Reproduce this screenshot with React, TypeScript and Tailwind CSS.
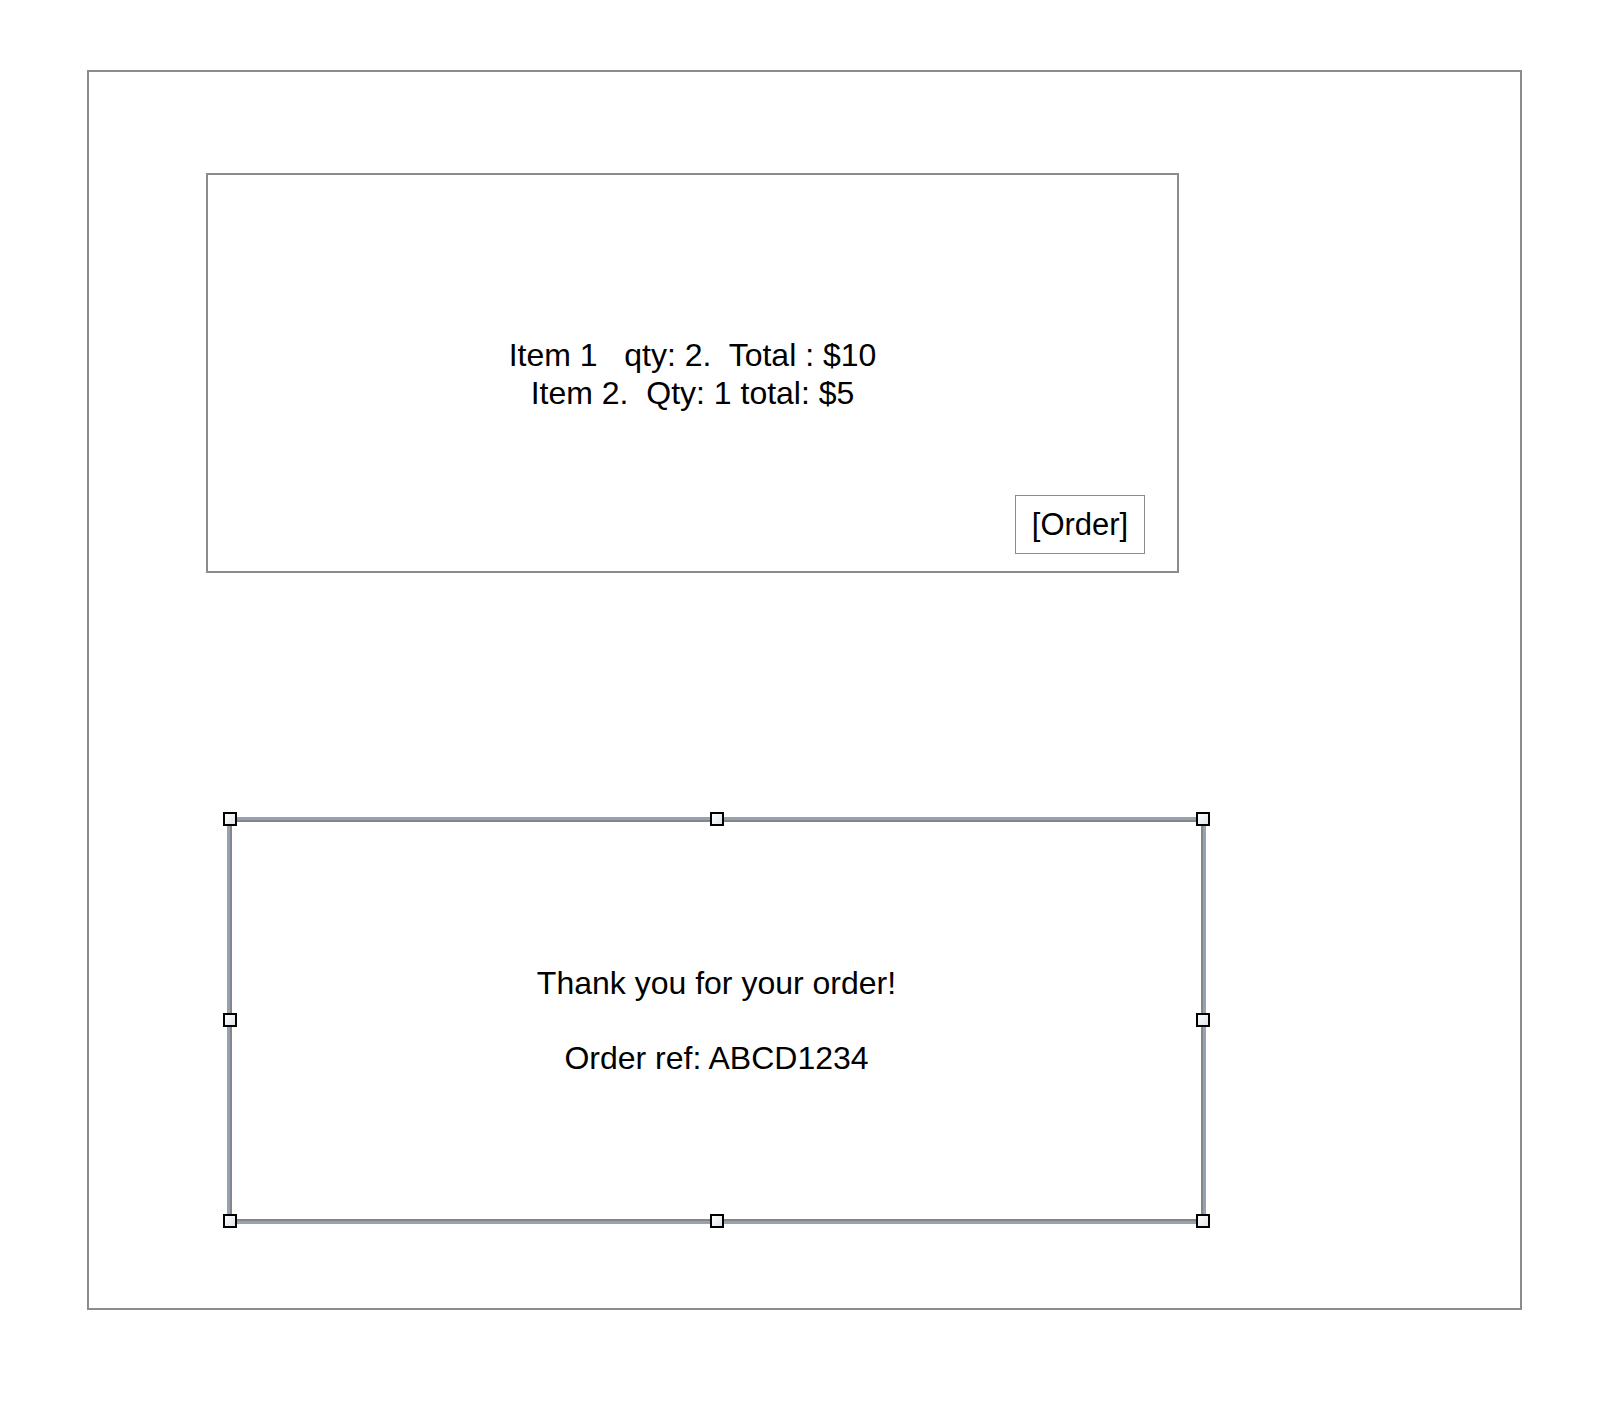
import React from 'react';

const handleSpots = [
  'left-[-7px] top-[-8px]',
  'left-[480px] top-[-8px]',
  'right-[-7px] top-[-8px]',
  'left-[-7px] top-[193px]',
  'right-[-7px] top-[193px]',
  'left-[-7px] bottom-[-7px]',
  'left-[480px] bottom-[-7px]',
  'right-[-7px] bottom-[-7px]',
];

function Handle({ spot }: { spot: string }) {
  return (
    <div
      className={`absolute ${spot} h-[14px] w-[14px] border-2 border-black bg-gradient-to-br from-white to-[#dfe3e8]`}
    />
  );
}

export default function App() {
  return (
    <div
      className="min-h-screen bg-white pl-[87px] pt-[70px] text-black"
      style={{ fontFamily: '"Liberation Sans", Arial, Helvetica, sans-serif' }}
    >
      {/* Page frame */}
      <div className="h-[1240px] w-[1435px] border-2 border-[#8c8c8c] pl-[117px] pt-[101px]">
        {/* Cart */}
        <div className="grid h-[400px] w-[973px] border-2 border-[#8c8c8c]">
          <div className="col-start-1 row-start-1 flex flex-col items-center justify-center pt-[2px] text-[32px] leading-[38px] whitespace-pre">
            <p>Item 1   qty: 2.  Total : $10</p>
            <p>Item 2.  Qty: 1 total: $5</p>
          </div>
          <button className="col-start-1 row-start-1 mb-[17px] mr-[32px] h-[59px] w-[130px] self-end justify-self-end border-[1.5px] border-[#8c8c8c] bg-white text-[31px] leading-none">
            [Order]
          </button>
        </div>

        {/* Confirmation, selected */}
        <div className="relative ml-[21px] mt-[244px] h-[407px] w-[979px] border-[3px] border-[#94a2b6]">
          <div className="flex h-full w-full flex-col items-center justify-center gap-[39px] border-2 border-[#858585] text-[32px] leading-[36px]">
            <p>Thank you for your order!</p>
            <p>Order ref: ABCD1234</p>
          </div>
          {handleSpots.map((s) => (
            <Handle key={s} spot={s} />
          ))}
        </div>
      </div>
    </div>
  );
}
